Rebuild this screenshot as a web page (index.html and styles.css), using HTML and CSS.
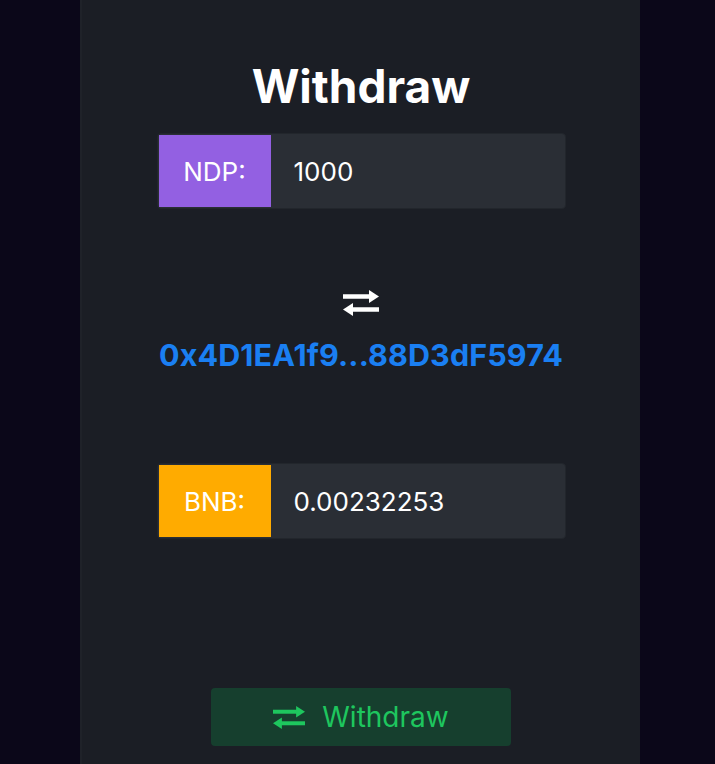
FILE: index.html
```html
<!DOCTYPE html>
<html lang="en">
<head>
  <meta charset="UTF-8" />
  <meta name="viewport" content="width=device-width, initial-scale=1.0"/>
  <title>Withdraw</title>
  <link rel="stylesheet" href="styles.css">
</head>
<body>
  <div class="panel">
    <h2 class="title">Withdraw</h2>

    <div class="input-group">
      <span class="tag tag-ndp">NDP:</span>
      <input type="text" class="amount" value="1000" />
    </div>

    <div class="swap">
      <svg class="swap-icon" viewBox="0 0 36 28" width="36" height="28">
        <path d="M0 7.5h28" stroke="currentColor" stroke-width="4.5" fill="none"/>
        <path d="M26 1l10 6.5-10 6.5z" fill="currentColor"/>
        <path d="M36 20.5H8" stroke="currentColor" stroke-width="4.5" fill="none"/>
        <path d="M10 14L0 20.5 10 27z" fill="currentColor"/>
      </svg>
      <div class="address">0x4D1EA1f9...88D3dF5974</div>
    </div>

    <div class="input-group">
      <span class="tag tag-bnb">BNB:</span>
      <input type="text" class="amount" value="0.00232253" />
    </div>

    <button class="withdraw-btn">
      <svg class="btn-icon" viewBox="0 0 36 28" width="32" height="25">
        <path d="M0 7.5h28" stroke="currentColor" stroke-width="4.5" fill="none"/>
        <path d="M26 1l10 6.5-10 6.5z" fill="currentColor"/>
        <path d="M36 20.5H8" stroke="currentColor" stroke-width="4.5" fill="none"/>
        <path d="M10 14L0 20.5 10 27z" fill="currentColor"/>
      </svg>
      Withdraw
    </button>
  </div>
</body>
</html>
```

FILE: styles.css
```css
* {
  margin: 0;
  padding: 0;
  box-sizing: border-box;
  font-family: Inter, 'Noto Sans', sans-serif;
}

body {
  background: #0b0719;
  min-height: 100vh;
  overflow: hidden;
}

.panel {
  width: 560px;
  height: 764px;
  margin-left: 80px;
  background: #1b1e25;
  border-left: 2px solid #1f2229;
  display: flex;
  flex-direction: column;
  align-items: center;
  padding-top: 58px;
}

.title {
  color: #ffffff;
  font-size: 46px;
  font-weight: 700;
  line-height: 56px;
  margin-bottom: 19px;
}

.input-group {
  width: 409px;
  height: 76px;
  display: flex;
  background: #2a2e35;
  border: 1px solid #22262c;
  border-radius: 4px;
  padding: 1px 0 1px 1px;
}

.tag {
  width: 112px;
  flex-shrink: 0;
  display: flex;
  align-items: center;
  justify-content: center;
  color: #ffffff;
  font-size: 26px;
}

.tag-ndp {
  background: #9360e2;
}

.tag-bnb {
  background: #ffab00;
}

.amount {
  flex: 1;
  min-width: 0;
  background: transparent;
  border: none;
  outline: none;
  color: #ffffff;
  font-size: 26px;
  padding-left: 23px;
}

.swap {
  height: 254px;
  display: flex;
  flex-direction: column;
  align-items: center;
  padding-top: 80px;
}

.swap-icon {
  color: #ffffff;
  margin-bottom: 20px;
}

.address {
  color: #1a7ff2;
  font-size: 30.5px;
  font-weight: 700;
  line-height: 36px;
  width: 409px;
  text-align: center;
  white-space: nowrap;
  letter-spacing: 0.1px;
}

.withdraw-btn {
  margin-top: 149px;
  width: 300px;
  height: 58px;
  background: #163f2e;
  color: #1ec65e;
  border: none;
  border-radius: 4px;
  font-size: 28px;
  display: flex;
  align-items: center;
  justify-content: center;
  gap: 17px;
}
```
